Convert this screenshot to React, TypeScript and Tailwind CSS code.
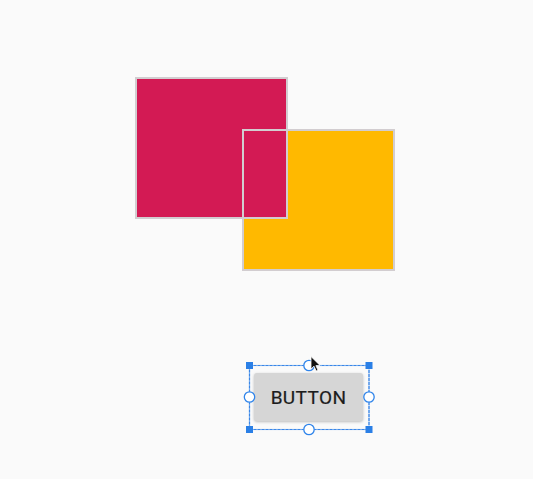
import React from "react";

export default function App() {
  return (
    <div className="relative w-[533px] h-[479px] bg-[#fafafa] overflow-hidden" style={{ fontFamily: "Roboto, 'Noto Sans', sans-serif" }}>
      {/* yellow square */}
      <div className="absolute left-[242px] top-[129px] w-[153px] h-[142px] bg-[#ffb900]" />
      {/* pink square */}
      <div className="absolute left-[135px] top-[77px] w-[153px] h-[142px] bg-[#d31a54]" />
      {/* outlines */}
      <div className="absolute left-[242px] top-[129px] w-[153px] h-[142px] border-2 border-[#d2cdd0] pointer-events-none" />
      <div className="absolute left-[135px] top-[77px] w-[153px] h-[142px] border-2 border-[#d2cdd0] pointer-events-none" />

      {/* button */}
      <div className="absolute left-[254px] top-[373px] w-[109px] h-[48px] rounded-[3px] bg-[#d6d6d6] shadow-[0_1px_3px_rgba(0,0,0,0.25)] flex items-center justify-center">
        <span className="text-[19px] font-normal tracking-[0.4px] text-[#1c1c1c] leading-none [-webkit-text-stroke:0.2px_#1c1c1c]">BUTTON</span>
      </div>

      {/* selection overlay */}
      <svg className="absolute left-0 top-0 pointer-events-none" width="533" height="479">
        <rect x="249.5" y="365.5" width="119.5" height="64" fill="none" stroke="#a8c9f2" strokeWidth="1.2" />
        <rect x="249.5" y="365.5" width="119.5" height="64" fill="none" stroke="#3a87e8" strokeWidth="1.2" strokeDasharray="3 1" />
        {[[249.5, 365.5], [369, 365.5], [249.5, 429.5], [369, 429.5]].map(([x, y], i) => (
          <rect key={i} x={x - 3.5} y={y - 3.5} width="7" height="7" fill="#2a7fe6" />
        ))}
        {[[309, 365.5], [309, 429.5], [249.5, 397], [369, 397]].map(([x, y], i) => (
          <circle key={i} cx={x} cy={y} r="5.2" fill="#ffffff" stroke="#2f84ea" strokeWidth="1.3" />
        ))}
        {/* cursor */}
        <path d="M311 356.5 L311 369 L314 366.2 L316.2 371 L318 370.2 L315.9 365.6 L320 365.4 Z" fill="#111" stroke="#fff" strokeWidth="0.8" strokeLinejoin="round" />
      </svg>
    </div>
  );
}
